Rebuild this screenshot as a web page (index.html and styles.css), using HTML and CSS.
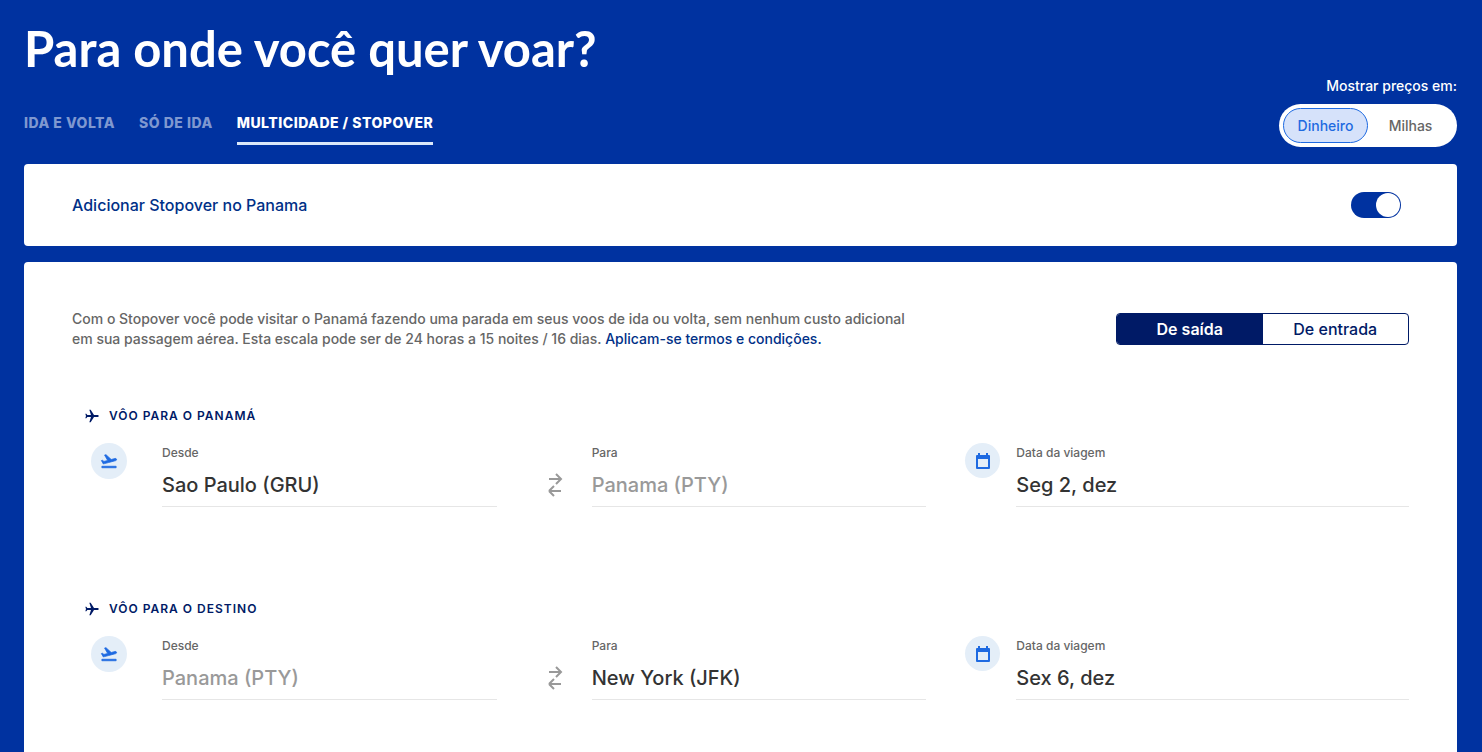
FILE: index.html
```html
<!DOCTYPE html>
<html lang="pt-BR">
<head>
    <meta charset="UTF-8">
    <meta name="viewport" content="width=device-width, initial-scale=1.0">
    <title>Para onde você quer voar?</title>
    <link rel="stylesheet" href="styles.css">
</head>
<body>
    <svg class="sprite" aria-hidden="true">
        <symbol id="plane" viewBox="0 0 24 24">
            <path d="M22 12c0 .83-.67 1.500-1.500 1.500H15L10 21.500H8l2.500-8H5L3.500 15.500H2L3 12 2 8.500h1.500L5 10.500h5.500L8 2.500h2l5 8h5.500c.83 0 1.500.67 1.500 1.500z"/>
        </symbol>
        <symbol id="takeoff" viewBox="0 0 24 24">
            <path d="M2.500 19h19v2h-19zM22.070 9.640c-.21-.8-1.040-1.280-1.840-1.060L14.920 10l-6.900-6.430-1.930.51 4.140 7.170-4.970 1.330-1.970-1.540-1.450.39 1.820 3.160.77 1.330 1.600-.43 5.310-1.420 4.350-1.160L21 11.490c.81-.23 1.280-1.050 1.070-1.850z"/>
        </symbol>
        <symbol id="calendar" viewBox="0 0 14 16">
            <path fill-rule="evenodd" d="M2 0h2v2h6V0h2v2h1a1 1 0 0 1 1 1v12a1 1 0 0 1-1 1H1a1 1 0 0 1-1-1V3a1 1 0 0 1 1-1h1zM2 6v8h10V6z"/>
        </symbol>
        <symbol id="swap" viewBox="0 0 16 26">
            <path d="M2 7h12M9 2l5 5-5 5M7 14l-5 5M14 19H2M7 24l-5-5"/>
        </symbol>
    </svg>

    <header class="header">
        <div>
            <h1>Para onde você quer voar?</h1>
            <nav class="tabs">
                <a class="tab" href="#">Ida e volta</a>
                <a class="tab" href="#">Só de ida</a>
                <a class="tab active" href="#">Multicidade / Stopover</a>
            </nav>
        </div>
        <div class="prices">
            <span class="prices-label">Mostrar preços em:</span>
            <div class="pill">
                <button class="pill-option selected" type="button">Dinheiro</button>
                <button class="pill-option" type="button">Milhas</button>
            </div>
        </div>
    </header>

    <section class="card stopover">
        <label for="stopover">Adicionar Stopover no Panama</label>
        <input class="switch" type="checkbox" id="stopover" checked>
    </section>

    <main class="card search">
        <div class="intro">
            <p>Com o Stopover você pode visitar o Panamá fazendo uma parada em seus voos de ida ou volta, sem nenhum custo adicional em sua passagem aérea. Esta escala pode ser de 24 horas a 15 noites / 16 dias. <a href="#">Aplicam-se termos e condições.</a></p>
            <div class="direction">
                <button class="direction-option selected" type="button">De saída</button>
                <button class="direction-option" type="button">De entrada</button>
            </div>
        </div>

        <section class="flight">
            <h2><svg class="icon-plane"><use href="#plane"/></svg>Vôo para o Panamá</h2>
            <div class="flight-row">
                <span class="circle"><svg><use href="#takeoff"/></svg></span>
                <div class="field">
                    <label for="from1">Desde</label>
                    <input type="text" id="from1" value="Sao Paulo (GRU)">
                </div>
                <svg class="icon-swap"><use href="#swap"/></svg>
                <div class="field">
                    <label for="to1">Para</label>
                    <input type="text" id="to1" value="Panama (PTY)" disabled>
                </div>
                <span class="circle date-icon"><svg><use href="#calendar"/></svg></span>
                <div class="field">
                    <label for="date1">Data da viagem</label>
                    <input type="text" id="date1" value="Seg 2, dez">
                </div>
            </div>
        </section>

        <section class="flight">
            <h2><svg class="icon-plane"><use href="#plane"/></svg>Vôo para o destino</h2>
            <div class="flight-row">
                <span class="circle"><svg><use href="#takeoff"/></svg></span>
                <div class="field">
                    <label for="from2">Desde</label>
                    <input type="text" id="from2" value="Panama (PTY)" disabled>
                </div>
                <svg class="icon-swap"><use href="#swap"/></svg>
                <div class="field">
                    <label for="to2">Para</label>
                    <input type="text" id="to2" value="New York (JFK)">
                </div>
                <span class="circle date-icon"><svg><use href="#calendar"/></svg></span>
                <div class="field">
                    <label for="date2">Data da viagem</label>
                    <input type="text" id="date2" value="Sex 6, dez">
                </div>
            </div>
        </section>
    </main>
</body>
</html>
```
FILE: styles.css
```css
:root {
    --blue: #0032a0;
    --navy: #001a66;
    --bright: #1e6ae1;
}

* {
    box-sizing: border-box;
}

body {
    display: flex;
    flex-direction: column;
    gap: 16px;
    min-height: 100vh;
    margin: 0;
    padding: 0 25px 0 24px;
    background-color: var(--blue);
    font-family: Inter, "Liberation Sans", sans-serif;
    font-weight: 500;
}

button,
input {
    font: inherit;
}

.sprite {
    position: absolute;
    width: 0;
    height: 0;
}

.header {
    display: flex;
    justify-content: space-between;
    align-items: flex-end;
    padding-top: 20px;
    color: white;
}

.header h1 {
    margin: 0 0 29px;
    font-family: Lato, sans-serif;
    font-size: 49px;
    line-height: 56px;
    font-weight: 700;
}

.tabs {
    display: flex;
    gap: 24px;
    padding-bottom: 3px;
}

.tab {
    padding: 8px 0 9px;
    border-bottom: 3px solid transparent;
    color: #7f98d0;
    font-size: 14px;
    line-height: 20px;
    font-weight: 800;
    letter-spacing: 0.5px;
    text-transform: uppercase;
    text-decoration: none;
}

.tab.active {
    color: white;
    border-color: #dbe8fa;
}

.prices {
    display: flex;
    flex-direction: column;
    align-items: flex-end;
    gap: 8px;
    padding-bottom: 1px;
}

.prices-label {
    font-size: 14px;
    line-height: 20px;
}

.pill {
    display: flex;
    height: 43px;
    padding: 4px;
    border-radius: 22px;
    background-color: white;
}

.pill-option {
    width: 85px;
    padding: 0;
    border: 1px solid transparent;
    border-radius: 18px;
    background: none;
    color: #666;
    font-size: 14px;
    cursor: pointer;
}

.pill-option.selected {
    border-color: var(--bright);
    background-color: #d6e2fa;
    color: var(--bright);
}

.card {
    border-radius: 4px;
    background-color: white;
}

.stopover {
    display: flex;
    justify-content: space-between;
    align-items: center;
    height: 82px;
    padding: 0 56px 0 48px;
    color: #003087;
    font-size: 16px;
}

.switch {
    display: flex;
    justify-content: flex-end;
    width: 50px;
    height: 26px;
    margin: 0;
    padding: 1px;
    border-radius: 13px;
    background-color: var(--blue);
    appearance: none;
    cursor: pointer;
}

.switch::before {
    content: "";
    width: 24px;
    height: 24px;
    border-radius: 50%;
    background-color: white;
}

.switch:not(:checked) {
    justify-content: flex-start;
    background-color: #999;
}

.search {
    flex: 1;
    padding: 47px 48px 52px;
    border-radius: 4px 4px 0 0;
}

.intro {
    display: flex;
    justify-content: space-between;
    align-items: flex-start;
    gap: 40px;
    margin-bottom: 57px;
}

.intro p {
    max-width: 850px;
    margin: 0;
    color: #666;
    font-size: 14px;
    line-height: 20px;
}

.intro a {
    color: #003087;
    text-decoration: none;
}

.direction {
    display: flex;
    flex: none;
    width: 293px;
    height: 32px;
    margin-top: 4px;
    border: 1px solid var(--navy);
    border-radius: 4px;
    overflow: hidden;
}

.direction-option {
    flex: 1;
    padding: 0;
    border: none;
    background: none;
    color: var(--navy);
    font-size: 16px;
    cursor: pointer;
}

.direction-option.selected {
    background-color: var(--navy);
    color: white;
    font-weight: 600;
}

.flight {
    margin-bottom: 92px;
}

.flight:last-child {
    margin-bottom: 0;
}

.flight h2 {
    display: flex;
    align-items: center;
    gap: 9px;
    margin: 0 0 17px;
    padding-left: 12px;
    color: var(--navy);
    font-size: 12px;
    line-height: 20px;
    font-weight: 600;
    letter-spacing: 1px;
    text-transform: uppercase;
}

.icon-plane {
    width: 16px;
    height: 16px;
    fill: var(--navy);
}

.flight-row {
    display: grid;
    grid-template-columns: 71px 335fr 95px 335fr 39px 51px 393fr;
    padding-left: 19px;
}

.circle {
    display: flex;
    align-items: center;
    justify-content: center;
    width: 36px;
    height: 36px;
    border-radius: 50%;
    background-color: #e4eef8;
}

.circle svg {
    width: 18px;
    height: 18px;
    fill: var(--bright);
    stroke: var(--bright);
    stroke-width: 1;
}

.date-icon {
    grid-column: 6;
    width: 35px;
    height: 35px;
}

.date-icon svg {
    width: 14px;
    height: 16px;
    stroke: none;
}

.field {
    display: flex;
    flex-direction: column;
}

.field label {
    color: #666;
    font-size: 12px;
    line-height: 20px;
}

.field input {
    width: 100%;
    height: 44px;
    padding: 0;
    border: none;
    border-bottom: 1px solid #e6e6e6;
    background: none;
    color: #333;
    font-size: 20px;
}

.field input:disabled {
    color: #999;
}

.icon-swap {
    justify-self: center;
    width: 16px;
    height: 26px;
    margin: 29px 0 0 21px;
    fill: none;
    stroke: #999;
    stroke-width: 2;
}
```
